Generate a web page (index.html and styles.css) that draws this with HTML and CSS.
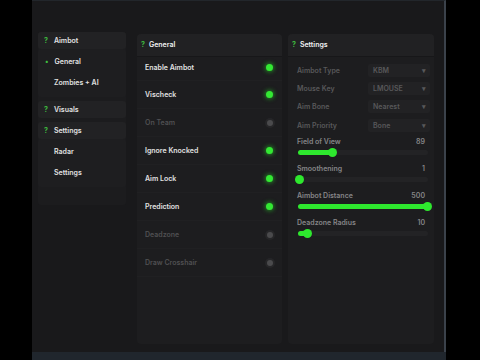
FILE: index.html
```html
<!DOCTYPE html>
<html lang="en">
<head>
  <meta charset="UTF-8">
  <title>Menu</title>
  <link rel="stylesheet" href="styles.css">
</head>
<body>
  <div class="screen">
    <div class="window-col">
      <div class="window">
        <div class="sidebar">
          <div class="group">
            <div class="group-head"><span class="q">?</span>Aimbot</div>
            <div class="group-items">
              <div class="nav-item active"><span class="bullet">•</span>General</div>
              <div class="nav-item">Zombies + AI</div>
            </div>
          </div>
          <div class="group">
            <div class="group-head"><span class="q">?</span>Visuals</div>
          </div>
          <div class="group">
            <div class="group-head"><span class="q">?</span>Settings</div>
            <div class="group-items">
              <div class="nav-item">Radar</div>
              <div class="nav-item">Settings</div>
            </div>
          </div>
        </div>

        <div class="panel">
          <div class="panel-head"><span class="q">?</span>General</div>
          <div class="toggles">
            <div class="toggle-row"><span>Enable Aimbot</span><i class="dot on"></i></div>
            <div class="toggle-row"><span>Vischeck</span><i class="dot on"></i></div>
            <div class="toggle-row off"><span>On Team</span><i class="dot"></i></div>
            <div class="toggle-row"><span>Ignore Knocked</span><i class="dot on"></i></div>
            <div class="toggle-row"><span>Aim Lock</span><i class="dot on"></i></div>
            <div class="toggle-row"><span>Prediction</span><i class="dot on"></i></div>
            <div class="toggle-row off"><span>Deadzone</span><i class="dot"></i></div>
            <div class="toggle-row off"><span>Draw Crosshair</span><i class="dot"></i></div>
          </div>
        </div>

        <div class="panel">
          <div class="panel-head"><span class="q">?</span>Settings</div>
          <div class="settings-body">
            <div class="select-row"><span>Aimbot Type</span><div class="select">KBM<b>▾</b></div></div>
            <div class="select-row"><span>Mouse Key</span><div class="select">LMOUSE<b>▾</b></div></div>
            <div class="select-row"><span>Aim Bone</span><div class="select">Nearest<b>▾</b></div></div>
            <div class="select-row"><span>Aim Priority</span><div class="select">Bone<b>▾</b></div></div>

            <div class="sliders">
              <div class="slider">
                <div class="slider-label"><span>Field of View</span><span>89</span></div>
                <div class="track"><div class="fill" style="width: 27%"></div></div>
              </div>
              <div class="slider">
                <div class="slider-label"><span>Smoothening</span><span>1</span></div>
                <div class="track"><div class="fill" style="width: 1%"></div></div>
              </div>
              <div class="slider">
                <div class="slider-label"><span>Aimbot Distance</span><span>500</span></div>
                <div class="track"><div class="fill" style="width: 100%"></div></div>
              </div>
              <div class="slider">
                <div class="slider-label"><span>Deadzone Radius</span><span>10</span></div>
                <div class="track"><div class="fill" style="width: 8%"></div></div>
              </div>
            </div>
          </div>
        </div>
      </div>
      <div class="strip"></div>
    </div>
  </div>
</body>
</html>
```

FILE: styles.css
```css
body {
  margin: 0;
  background: #000;
  font-family: 'Inter', 'Noto Sans', sans-serif;
  font-size: 7px;
  font-weight: 600;
  color: #e2e2e2;
}
.screen {
  width: 480px;
  height: 360px;
  padding-left: 32px;
  box-sizing: border-box;
  overflow: hidden;
}
.window-col {
  width: 414px;
}
.window {
  height: 352px;
  box-sizing: border-box;
  background: #19191b;
  border-right: 2px solid #3b424b;
  border-top: 1px solid #22262b;
  padding: 31px 10px 0 6px;
  display: flex;
}
.strip {
  height: 8px;
  background: #20262d;
}
.q {
  color: #3fbf3f;
  font-weight: 700;
  margin-right: 6px;
}

/* sidebar */
.sidebar {
  width: 88px;
  height: 173px;
  background: #1c1c1e;
  border-radius: 3px;
  display: flex;
  flex-direction: column;
  gap: 4px;
  margin-right: 11px;
}
.group-head {
  height: 17px;
  line-height: 17px;
  background: #222224;
  border-radius: 3px;
  padding-left: 6px;
}
.group-items {
  padding: 3px 0 3px;
  background: #1e1e20;
  border-radius: 3px;
}
.nav-item {
  height: 21px;
  line-height: 20px;
  padding-left: 16px;
}
.nav-item.active {
  padding-left: 7px;
}
.bullet {
  color: #3fbf3f;
  margin-right: 6px;
}

/* panels */
.panel {
  width: 145px;
  height: 310px;
  margin-top: 2px;
  background: #1d1d1f;
  border-radius: 4px;
  margin-right: 6px;
}
.panel:last-child {
  width: 146px;
  margin-right: 0;
}
.panel-head {
  height: 22px;
  line-height: 22px;
  background: #212123;
  border-bottom: 1px solid #171719;
  border-radius: 4px 4px 0 0;
  padding-left: 4px;
  color: #f2f2f2;
}
.panel-head .q {
  margin-right: 4px;
}
.toggle-row {
  height: 28px;
  display: flex;
  align-items: center;
  justify-content: space-between;
  padding: 0 9px 0 8px;
  border-bottom: 1px solid #202022;
  box-sizing: border-box;
}
.toggle-row:first-child {
  height: 24px;
  padding-bottom: 2px;
}
.toggle-row.off span {
  color: #505052;
}
.dot {
  width: 6px;
  height: 6px;
  border-radius: 50%;
  background: #4a4a4c;
  box-shadow: 0 0 0 2px #262628;
}
.dot.on {
  width: 7px;
  height: 7px;
  background: #33e833;
  box-shadow: 0 0 4px 1px rgba(40, 220, 40, 0.55);
}

/* settings */
.settings-body {
  padding: 4px 4px 0 9px;
}
.select-row {
  height: 18.3px;
  display: flex;
  align-items: center;
  justify-content: space-between;
  color: #58585a;
}
.select {
  width: 62px;
  height: 13px;
  line-height: 13px;
  background: #222224;
  border-radius: 2px;
  padding-left: 5px;
  box-sizing: border-box;
  position: relative;
}
.select b {
  position: absolute;
  right: 4px;
  top: 0;
  font-size: 7px;
}
.sliders {
  margin-top: 2px;
}
.slider {
  height: 27px;
  padding-right: 5px;
}
.slider-label {
  display: flex;
  justify-content: space-between;
  color: #858587;
  height: 12px;
  line-height: 12px;
}
.track {
  margin-top: 2px;
  height: 5px;
  background: #232325;
  border-radius: 3px;
  position: relative;
  margin-left: 1px;
  margin-right: -3px;
}
.fill {
  height: 5px;
  background: #2ee82e;
  border-radius: 3px;
  position: relative;
  min-width: 2px;
}
.fill::after {
  content: '';
  position: absolute;
  right: -4px;
  top: -2px;
  width: 9px;
  height: 9px;
  border-radius: 50%;
  background: #2ee82e;
}
```
